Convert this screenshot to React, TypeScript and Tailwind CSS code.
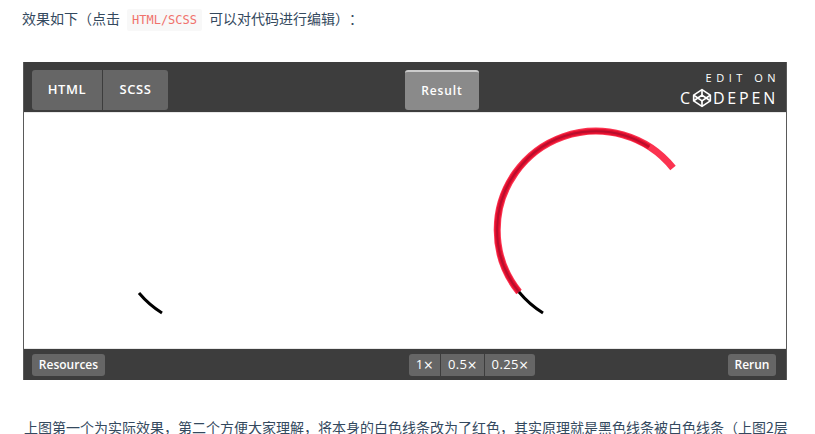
const cjk = "font-['Noto_Sans_CJK_SC','Noto_Sans',sans-serif]";
const ui = "font-['Open_Sans','Noto_Sans',sans-serif]";

function Arc({ red }: { red?: boolean }) {
  return (
    <svg width="200" height="200" viewBox="0 0 200 200" fill="none" className="block overflow-visible">
      {red ? (
        <>
          <path d="M23 162 A98.8 98.8 0 0 1 1.2 100 A98.8 98.8 0 0 1 177 38" stroke="#fb3350" strokeWidth="7" />
          <path d="M23 162 A98.8 98.8 0 0 1 153.2 16.8" stroke="#e4112f" strokeWidth="5" />
          <path d="M23 162 A98.8 98.8 0 0 1 153.2 16.8" stroke="#b80d2d" strokeWidth="2" />
          <path d="M23 162 A98.8 98.8 0 0 0 47 183" stroke="#000" strokeWidth="3" />
        </>
      ) : (
        <path d="M24 163 A98.8 98.8 0 0 0 47 183" stroke="#000" strokeWidth="3" />
      )}
    </svg>
  );
}

function CodePenLogo() {
  return (
    <svg width="20" height="20" viewBox="0 0 24 24" fill="none" stroke="#fff" strokeWidth="2" strokeLinejoin="round" className="ml-[-1px] mr-[1px]">
      <path d="M12 2 L22 8.5 V15.5 L12 22 L2 15.5 V8.5 Z" />
      <path d="M12 8.5 L17 12 L12 15.5 L7 12 Z" />
      <path d="M12 2 V8.5 M12 15.5 V22 M2 8.5 L7 12 L2 15.5 M22 8.5 L17 12 L22 15.5" />
    </svg>
  );
}

export default function App() {
  return (
    <div className={`w-[815px] h-[434px] overflow-hidden bg-white text-[#34495e] [text-spacing-trim:space-all] ${cjk}`}>
      <p className="pl-[22px] pt-[6px] h-[62px] text-[14px] leading-[24px]">
        效果如下（点击
        <code className="mx-[7px] inline-block h-[22px] rounded-[2px] bg-[#f8f8f8] px-[5px] font-['DejaVu_Sans_Mono','Liberation_Mono',monospace] text-[12px] leading-[22px] text-[#f0726c]">
          HTML/SCSS
        </code>
        可以对代码进行编辑）：
      </p>

      <div className={`ml-[23px] flex h-[318px] w-[764px] flex-col border-x border-[#5a5a5a] ${ui}`}>
        <div className="flex h-[50px] shrink-0 items-start bg-[#3d3d3d] pl-[8px] pr-[10px] pt-[8px]">
          <div className="flex h-[40px] overflow-hidden rounded-[3px] text-[13px] font-semibold tracking-[0.6px] text-white">
            <span className="flex w-[70px] items-center justify-center bg-[#666]">HTML</span>
            <span className="ml-[1px] flex w-[65px] items-center justify-center bg-[#666]">SCSS</span>
          </div>
          <span className="ml-[237px] flex h-[40px] w-[74px] items-center justify-center rounded-[3px] border-t-2 border-[#ccc] bg-[#8a8a8a] text-[12px] font-semibold tracking-[0.9px] text-white">
            Result
          </span>
          <div className="ml-auto flex flex-col items-end text-white">
            <span className="mt-[1px] mr-[-4px] text-[11px] leading-[14px] font-normal tracking-[4.5px]">EDIT ON</span>
            <span className="mt-[3px] mr-[-2px] flex h-[20px] items-center text-[16px] leading-[20px] font-normal tracking-[2.8px]">
              C<CodePenLogo />DEPEN
            </span>
          </div>
        </div>

        <div className="flex h-[237px] shrink-0 border-y-[1px] border-y-[#e8e8e8] bg-white pt-[17px]">
          <div className="ml-[91px] w-[381px] shrink-0">
            <Arc />
          </div>
          <Arc red />
        </div>

        <div className="flex flex-1 items-center bg-[#3d3d3d] pl-[8px] pr-[10px] text-[12px] font-semibold text-white">
          <span className="flex h-[22px] w-[73px] items-center justify-center rounded-[3px] bg-[#666]">Resources</span>
          <div className="ml-[304px] flex h-[22px] overflow-hidden rounded-[3px] text-[13px] font-normal tracking-[0.4px]">
            <span className="flex w-[31px] items-center justify-center bg-[#666]">1<span className="text-[16px] leading-none">×</span></span>
            <span className="ml-[1px] flex w-[43px] items-center justify-center bg-[#666]">0.5<span className="text-[16px] leading-none">×</span></span>
            <span className="ml-[1px] flex w-[50px] items-center justify-center bg-[#666]">0.25<span className="text-[16px] leading-none">×</span></span>
          </div>
          <span className="ml-auto flex h-[22px] w-[48px] items-center justify-center rounded-[3px] bg-[#666]">Rerun</span>
        </div>
      </div>

      <p className="mt-[35px] whitespace-nowrap pl-[24px] text-[14px] leading-[24px]">
        上图第一个为实际效果，第二个方便大家理解，将本身的白色线条改为了红色，其实原理就是黑色线条被白色线条（上图2层
      </p>
    </div>
  );
}
